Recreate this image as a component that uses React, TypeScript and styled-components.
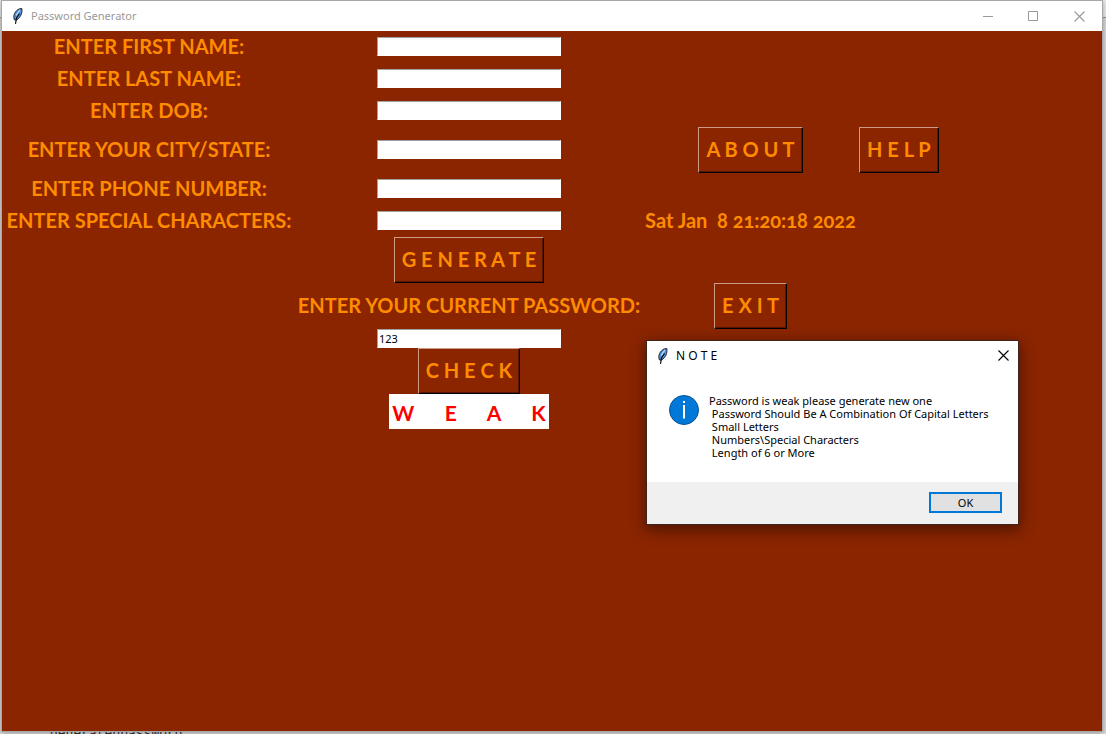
import React from 'react';
import styled, { createGlobalStyle } from 'styled-components';

const GlobalStyle = createGlobalStyle`
  * { box-sizing: border-box; }
  body {
    margin: 0;
    background: #d6d6d6;
    font-family: 'Noto Sans', 'Open Sans', sans-serif;
  }
`;

const Desktop = styled.div`
  position: relative;
  min-height: 100vh;
  overflow: hidden;
  display: flex;
  flex-direction: column;
  padding: 0 3px 2px 1px;
  background: linear-gradient(#eeeeee 17px, #909090 17px, #909090 18px, #dcdcdc 18px);
`;

const BackgroundLine = styled.div`
  position: absolute;
  left: 50px;
  bottom: -8px;
  font: 13px/16px 'Liberation Mono', monospace;
  color: #333;
`;

const AppWindow = styled.main`
  position: relative;
  flex: 1;
  display: flex;
  flex-direction: column;
  border: 1px solid #a8a8a8;
  background: #8b2500;
  box-shadow: 0 1px 6px rgba(0, 0, 0, 0.35);
`;

const TitleBar = styled.header`
  display: flex;
  align-items: center;
  height: 30px;
  padding-left: 9px;
  background: #fff;
`;

const Title = styled.h1`
  flex: 1;
  margin: 0 0 0 5px;
  font-size: 11px;
  font-weight: 400;
  line-height: 16px;
  color: #999;
`;

const CaptionButton = styled.button`
  display: flex;
  align-items: center;
  justify-content: center;
  width: 46px;
  height: 30px;
  padding: 0;
  border: 0;
  background: transparent;
  color: #999;
`;

const Form = styled.form`
  display: grid;
  grid-template-columns: 294px 346px 217px max-content;
  grid-template-rows: 32px 32px 32px 46px 32px 32px 46px 46px 19px 46px 35px;
  place-items: center;
  font-family: Lato, 'Open Sans', sans-serif;
  font-size: 20px;
  font-weight: 700;
  line-height: 24px;
  color: #ff8c00;
`;

const Label = styled.label<{ $column?: number }>`
  grid-column: ${({ $column = 1 }) => $column};
  padding-bottom: 2px;
  white-space: nowrap;
`;

const Entry = styled.input`
  grid-column: 2;
  width: 184px;
  height: 19px;
  margin-bottom: 1px;
  padding: 0 1px;
  border: 1px solid #fff;
  border-top-color: #a0a0a0;
  border-left-color: #a0a0a0;
  outline: 0;
  background: #fff;
  font: 11px/16px 'Noto Sans', sans-serif;
  color: #000;
`;

const RaisedButton = styled.button<{ $column: number }>`
  grid-column: ${({ $column }) => $column};
  height: 46px;
  padding: 0 7px 2px;
  border: 1px solid #000;
  border-top-color: #cf9a85;
  border-left-color: #cf9a85;
  background: #8b2500;
  box-shadow: inset -1px -1px #571700;
  font: inherit;
  color: inherit;
  white-space: nowrap;
`;

const Clock = styled.time`
  grid-column: 3;
  padding-bottom: 2px;
  white-space: pre;
  font-variant-numeric: oldstyle-nums;
`;

const Strength = styled.output`
  grid-column: 2;
  padding: 2px 3px 0;
  background: #fff;
  font-size: 21px;
  line-height: 33px;
  white-space: pre;
  color: #f00;
`;

const Dialog = styled.section`
  position: absolute;
  top: 340px;
  left: 645px;
  width: 371px;
  background: #fff;
  outline: 1px solid #40231a;
  box-shadow: 0 4px 14px 2px rgba(0, 0, 0, 0.45);
  color: #000;
`;

const DialogHeader = styled.header`
  display: flex;
  align-items: center;
  height: 29px;
  padding-left: 9px;
`;

const DialogTitle = styled.h2`
  flex: 1;
  margin: 0 0 0 5px;
  font-size: 12px;
  font-weight: 400;
  line-height: 16px;
`;

const CloseButton = styled(CaptionButton)`
  width: 30px;
  color: #000;
`;

const DialogBody = styled.div`
  display: flex;
  gap: 9px;
  height: 112px;
  padding: 24px 22px 0;
`;

const Message = styled.p`
  margin: 0;
  font-size: 11px;
  line-height: 13px;
  white-space: pre;
`;

const DialogFooter = styled.footer`
  display: flex;
  justify-content: flex-end;
  padding: 10px 16px 11px;
  background: #f0f0f0;
`;

const OkButton = styled.button`
  width: 73px;
  height: 21px;
  padding: 0;
  border: 2px solid #0078d7;
  background: #e1e1e1;
  font: 11px/16px 'Noto Sans', sans-serif;
  color: #000;
`;

const Feather = () => (
  <svg width="15" height="16" viewBox="0 0 15 16" aria-hidden="true">
    <path d="M3.500 12C1.500 8 4 2.500 8.500.8L10.800.5C11.500 4.500 10 9.500 5.500 12Z" fill="#4f8fdc" stroke="#1a1a1a" strokeWidth="0.900" />
    <path d="M8.800 2L5.200 7.500" stroke="#b9dcff" strokeWidth="1.300" />
    <path d="M8.500 5.500L5.500 10L4.500 15.800" stroke="#000" strokeWidth="1.100" fill="none" />
  </svg>
);

const Cross = ({ size }: { size: number }) => (
  <svg width={size} height={size} viewBox="0 0 11 11" aria-hidden="true">
    <path d="M.5.5l10 10M10.500.5l-10 10" stroke="currentColor" strokeWidth="1.100" fill="none" />
  </svg>
);

const InfoIcon = () => (
  <svg width="31" height="32" viewBox="0 0 31 32" aria-hidden="true">
    <circle cx="15" cy="16" r="14.500" fill="#0078d7" stroke="#0a5291" />
    <path d="M14 7h2v2h-2zM14 11h2v13.500h-2z" fill="#fff" />
  </svg>
);

const fields = [
  { id: 'first', label: 'ENTER FIRST NAME:' },
  { id: 'last', label: 'ENTER LAST NAME:' },
  { id: 'dob', label: 'ENTER DOB:' },
  { id: 'city', label: 'ENTER YOUR CITY/STATE:' },
  { id: 'phone', label: 'ENTER PHONE NUMBER:' },
  { id: 'special', label: 'ENTER SPECIAL CHARACTERS:' },
];

const message = [
  'Password is weak please generate new one',
  ' Password Should Be A Combination Of Capital Letters',
  ' Small Letters',
  ' Numbers\\Special Characters',
  ' Length of 6 or More',
].join('\n');

export default function App() {
  return (
    <Desktop>
      <GlobalStyle />
      <BackgroundLine aria-hidden="true">generatedpassword</BackgroundLine>
      <AppWindow>
        <TitleBar>
          <Feather />
          <Title>Password Generator</Title>
          <CaptionButton aria-label="Minimize">
            <svg width="11" height="11" aria-hidden="true"><path d="M1 5.500h10" stroke="currentColor" /></svg>
          </CaptionButton>
          <CaptionButton aria-label="Maximize">
            <svg width="11" height="11" aria-hidden="true"><path d="M.5.5h9v9h-9z" stroke="currentColor" fill="none" /></svg>
          </CaptionButton>
          <CaptionButton aria-label="Close"><Cross size={11} /></CaptionButton>
        </TitleBar>
        <Form onSubmit={(e) => e.preventDefault()}>
          {fields.map(({ id, label }) => (
            <React.Fragment key={id}>
              <Label htmlFor={id}>{label}</Label>
              <Entry id={id} type="text" />
              {id === 'city' && (
                <>
                  <RaisedButton type="button" $column={3}>A B O U T</RaisedButton>
                  <RaisedButton type="button" $column={4}>H E L P</RaisedButton>
                </>
              )}
              {id === 'special' && <Clock>{'Sat Jan  8 21:20:18 2022'}</Clock>}
            </React.Fragment>
          ))}
          <RaisedButton type="button" $column={2}>G E N E R A T E</RaisedButton>
          <Label htmlFor="current" $column={2}>ENTER YOUR CURRENT PASSWORD:</Label>
          <RaisedButton type="button" $column={3}>E X I T</RaisedButton>
          <Entry id="current" type="text" defaultValue="123" />
          <RaisedButton type="submit" $column={2}>C H E C K</RaisedButton>
          <Strength>{'W      E      A      K'}</Strength>
        </Form>
        <Dialog role="dialog" aria-labelledby="note-title">
          <DialogHeader>
            <Feather />
            <DialogTitle id="note-title">N O T E</DialogTitle>
            <CloseButton aria-label="Close note"><Cross size={11} /></CloseButton>
          </DialogHeader>
          <DialogBody>
            <InfoIcon />
            <Message>{message}</Message>
          </DialogBody>
          <DialogFooter>
            <OkButton type="button">OK</OkButton>
          </DialogFooter>
        </Dialog>
      </AppWindow>
    </Desktop>
  );
}
